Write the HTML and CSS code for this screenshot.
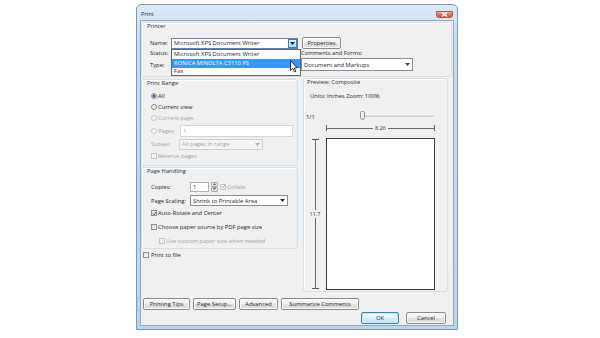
FILE: index.html
```html
<!DOCTYPE html>
<html lang="en">
<head>
    <meta charset="UTF-8">
    <meta name="viewport" content="width=device-width, initial-scale=1.0">
    <title>Print</title>
    <link rel="stylesheet" href="styles.css">
</head>
<body>

<div class="window">
    <div class="titlebar">
        <span class="title">Print</span>
        <span class="close">
            <svg width="7" height="5" viewBox="0 0 7 5"><path d="M1 0.5 L6 4.5 M6 0.5 L1 4.5" stroke="#fff" stroke-width="1.3"/></svg>
        </span>
    </div>

    <div class="client">
        <!-- Printer -->
        <div class="group printer">
            <div class="legend">Printer</div>
            <div class="prow prow-name">
                <div class="pleft">
                    <span class="plabel">Name:</span>
                    <div class="combo combo-name">
                        <span>Microsoft XPS Document Writer</span>
                        <span class="combo-arrow hot"><svg width="5" height="3" viewBox="0 0 5 3"><path d="M0 0 H5 L2.5 3 Z" fill="#111"/></svg></span>
                        <ul class="droplist">
                            <li>Microsoft XPS Document Writer</li>
                            <li class="selected">KONICA MINOLTA C3110 PS</li>
                            <li>Fax</li>
                        </ul>
                    </div>
                </div>
                <button class="btn btn-props">Properties</button>
            </div>
            <div class="prow prow-status">
                <div class="pleft"><span class="plabel">Status:</span></div>
                <span>Comments and Forms:</span>
            </div>
            <div class="prow prow-type">
                <div class="pleft"><span class="plabel">Type:</span></div>
                <div class="combo combo-forms">
                    <span>Document and Markups</span>
                    <span class="combo-arrow"><svg width="5" height="3" viewBox="0 0 5 3"><path d="M0 0 H5 L2.5 3 Z" fill="#444"/></svg></span>
                </div>
            </div>
        </div>

        <div class="middle">
            <div class="leftcol">
                <!-- Print Range -->
                <div class="group range">
                    <div class="legend">Print Range</div>
                    <div class="opt opt-all"><span class="radio checked"></span>All</div>
                    <div class="opt"><span class="radio"></span>Current view</div>
                    <div class="opt disabled"><span class="radio"></span>Current page</div>
                    <div class="opt opt-pages disabled">
                        <span class="pages-label"><span class="radio"></span>Pages</span>
                        <span class="field field-pages">1</span>
                    </div>
                    <div class="opt opt-subset disabled">
                        <span class="subset-label">Subset:</span>
                        <div class="combo combo-subset">
                            <span>All pages in range</span>
                            <span class="combo-arrow"><svg width="5" height="3" viewBox="0 0 5 3"><path d="M0 0 H5 L2.5 3 Z" fill="#b0b0b0"/></svg></span>
                        </div>
                    </div>
                    <div class="opt opt-reverse disabled"><span class="cb"></span>Reverse pages</div>
                </div>

                <!-- Page Handling -->
                <div class="group handling">
                    <div class="legend">Page Handling</div>
                    <div class="hrow hrow-copies">
                        <span class="hlabel">Copies:</span>
                        <span class="field field-copies">1</span>
                        <span class="spin">
                            <span><svg width="3" height="2" viewBox="0 0 3 2"><path d="M0 2 H3 L1.5 0 Z" fill="#555"/></svg></span>
                            <span><svg width="3" height="2" viewBox="0 0 3 2"><path d="M0 0 H3 L1.5 2 Z" fill="#555"/></svg></span>
                        </span>
                        <span class="collate disabled"><span class="cb checked"><svg width="5" height="5" viewBox="0 0 5 5"><path d="M0.8 2.6 L2 3.8 L4.3 0.9" stroke="#a8a8a8" stroke-width="1" fill="none"/></svg></span>Collate</span>
                    </div>
                    <div class="hrow hrow-scaling">
                        <span class="hlabel">Page Scaling:</span>
                        <div class="combo combo-scaling">
                            <span>Shrink to Printable Area</span>
                            <span class="combo-arrow"><svg width="5" height="3" viewBox="0 0 5 3"><path d="M0 0 H5 L2.5 3 Z" fill="#222"/></svg></span>
                        </div>
                    </div>
                    <div class="opt opt-rotate"><span class="cb checked"><svg width="5" height="5" viewBox="0 0 5 5"><path d="M0.8 2.6 L2 3.8 L4.3 0.9" stroke="#2a4a8a" stroke-width="1" fill="none"/></svg></span>Auto-Rotate and Center</div>
                    <div class="opt opt-source"><span class="cb"></span>Choose paper source by PDF page size</div>
                    <div class="opt opt-custom disabled"><span class="cb"></span>Use custom paper size when needed</div>
                </div>

                <div class="opt opt-file"><span class="cb"></span>Print to file</div>
            </div>

            <!-- Preview -->
            <div class="group preview">
                <div class="legend">Preview: Composite</div>
                <div class="units">Units: Inches Zoom: 100%</div>
                <div class="slider-row">
                    <span class="pagenum">1/1</span>
                    <span class="slider"><span class="thumb"></span></span>
                </div>
                <div class="hruler"><span class="rlabel">8.26</span></div>
                <div class="page-row">
                    <div class="vruler"><span class="rlabel">11.7</span></div>
                    <div class="page"></div>
                </div>
            </div>
        </div>

        <div class="toolbar">
            <button class="btn btn-tips">Printing Tips</button>
            <button class="btn btn-setup">Page Setup...</button>
            <button class="btn btn-adv">Advanced</button>
            <button class="btn btn-sum">Summarize Comments</button>
        </div>
        <div class="actions">
            <button class="btn btn-ok">OK</button>
            <button class="btn btn-cancel">Cancel</button>
        </div>
    </div>

    <svg class="cursor" width="8" height="13" viewBox="0 0 8 13">
        <path d="M0.5 0.5 V10.5 L2.8 8.4 L4.4 12 L5.8 11.4 L4.3 7.9 H7.3 Z" fill="#fff" stroke="#000" stroke-width="0.8" stroke-linejoin="round"/>
    </svg>
</div>

</body>
</html>
```

FILE: styles.css
```css
* {
    box-sizing: border-box;
}
body {
    margin: 0;
    width: 600px;
    height: 338px;
    overflow: hidden;
    background-color: #fff;
    font-family: "Open Sans", "Noto Sans", sans-serif;
    font-size: 5.8px;
    color: #1e1e1e;
    position: relative;
}
ul {
    margin: 0;
    padding: 0;
    list-style: none;
}

/* window frame */
.window {
    position: absolute;
    left: 136px;
    top: 4px;
    width: 322px;
    height: 326px;
    border: 1px solid #7a98b8;
    border-radius: 5px 5px 0 0;
    background: linear-gradient(#dce9f6, #c6dbf0 40px, #bcd4ec);
    padding: 0 3px 3px;
    display: flex;
    flex-direction: column;
}
.titlebar {
    height: 15px;
    flex: none;
    padding-left: 1px;
    position: relative;
}
.title {
    display: block;
    margin-top: 6px;
    line-height: 7px;
    color: #1a2a3a;
}
.close {
    position: absolute;
    right: 1px;
    top: 6px;
    width: 17px;
    height: 7px;
    border: 1px solid #a55a4a;
    border-radius: 0 0 3px 3px;
    background: linear-gradient(#ecb6a6, #da7560 50%, #cd5038);
    display: flex;
    align-items: center;
    justify-content: center;
}
.client {
    flex: 1;
    background-color: #f0f0f0;
    border: 1px solid #8fa6c0;
    display: flex;
    flex-direction: column;
}

/* group boxes */
.group {
    border: 1px solid #d5dfe5;
    border-radius: 3px;
    box-shadow: inset 1px 1px 0 #fff;
}
.legend {
    height: 6px;
    line-height: 6px;
    color: #333;
}

/* printer */
.printer {
    margin: 1px 1px 0 0;
    height: 55px;
    flex: none;
    padding-left: 8px;
}
.printer .legend {
    margin-left: -3px;
}
.prow {
    display: flex;
    align-items: flex-start;
}
.pleft {
    width: 151px;
    display: flex;
    align-items: center;
    height: 100%;
}
.plabel {
    width: 21px;
}
.prow-name {
    margin-top: 8px;
    height: 12px;
}
.prow-status {
    height: 8px;
    align-items: center;
}
.prow-type {
    margin-top: 1px;
    height: 13px;
}

/* combos, fields */
.combo {
    position: relative;
    height: 11px;
    background-color: #fff;
    border: 1px solid #8c8c8c;
    display: flex;
    align-items: center;
    padding-left: 2px;
    white-space: nowrap;
}
.combo-arrow {
    position: absolute;
    right: 0;
    top: 0;
    bottom: 0;
    width: 9px;
    display: flex;
    align-items: center;
    justify-content: center;
}
.combo-arrow.hot {
    border: 1px solid #3c7fb1;
    background: linear-gradient(#eaf6fd, #d9f0fc 50%, #bee6fd 50%, #a7d9f5);
}
.combo-name {
    width: 127px;
    border-color: #5d87b0;
}
.combo-forms {
    width: 112px;
    height: 13px;
}
.droplist {
    position: absolute;
    left: -1px;
    top: 10px;
    width: 130px;
    height: 27px;
    background-color: #fff;
    border: 1px solid #646464;
    z-index: 2;
}
.droplist li {
    height: 9px;
    line-height: 9px;
    padding-left: 2px;
}
.droplist li:last-child {
    height: 7px;
    line-height: 7px;
}
.droplist .selected {
    background-color: #3399ff;
    color: #fff;
}
.field {
    height: 12px;
    background-color: #fff;
    border: 1px solid #abadb3;
    padding-left: 2px;
    display: flex;
    align-items: center;
}

/* buttons */
.btn {
    height: 12px;
    padding: 0;
    font: inherit;
    color: #1e1e1e;
    border: 1px solid #8a8a8a;
    border-radius: 2px;
    background: linear-gradient(#f7f7f7, #efefef 50%, #e3e3e3 50%, #d9d9d9);
    box-shadow: inset 0 0 0 1px #fbfbfb;
    display: flex;
    align-items: center;
    justify-content: center;
    white-space: nowrap;
}
.btn-props {
    margin-left: 1px;
    width: 39px;
}

/* radio buttons and check boxes */
.opt {
    display: flex;
    align-items: center;
    height: 10px;
    white-space: nowrap;
}
.disabled {
    color: #a3a3a3;
}
.radio {
    flex: none;
    width: 6px;
    height: 6px;
    margin-right: 1px;
    border: 1px solid #8a8a8a;
    border-radius: 50%;
    background: radial-gradient(#fff, #dcdcdc);
}
.radio.checked {
    background: radial-gradient(circle, #2f6fc0 0, #1c4f96 1.3px, #fff 1.8px, #e4e4e4);
}
.disabled .radio {
    border-color: #c4c4c4;
    background: #f6f6f6;
}
.cb {
    flex: none;
    width: 6px;
    height: 6px;
    margin-right: 1px;
    border: 1px solid #8e8f8f;
    background: linear-gradient(135deg, #dadada, #fff);
    display: flex;
    align-items: center;
    justify-content: center;
}
.cb svg {
    flex: none;
}
.disabled .cb {
    border-color: #c4c4c4;
    background: #f4f4f4;
}

/* print range */
.range {
    margin-top: 1px;
    height: 87px;
    padding-left: 9px;
    display: flex;
    flex-direction: column;
}
.range .legend,
.handling .legend {
    margin-left: -4px;
}
.opt-all {
    margin-top: 5px;
}
.range .opt + .opt {
    margin-top: 1px;
}
.range .opt-pages {
    height: 13px;
}
.pages-label {
    width: 29px;
    display: flex;
    align-items: center;
}
.field-pages {
    width: 113px;
    border-color: #d4d4d4;
}
.range .opt-subset {
    height: 12px;
}
.subset-label {
    width: 28px;
}
.combo-subset {
    width: 84px;
    height: 11px;
    border-color: #cfcfcf;
    background-color: #f4f4f4;
}
.range .opt-reverse {
    margin-top: 2px;
}

/* page handling */
.handling {
    margin-top: 1px;
    height: 82px;
    padding-left: 9px;
    display: flex;
    flex-direction: column;
}
.hrow {
    display: flex;
    align-items: center;
    height: 11px;
    white-space: nowrap;
}
.hlabel {
    width: 39px;
}
.hrow-copies {
    margin-top: 7px;
}
.field-copies {
    width: 19px;
    height: 10px;
}
.spin {
    margin-left: 2px;
    width: 7px;
    height: 10px;
    display: flex;
    flex-direction: column;
}
.spin span {
    flex: 1;
    border: 1px solid #a8a8a8;
    border-radius: 1px;
    background: linear-gradient(#f4f4f4, #e2e2e2);
    display: flex;
    align-items: center;
    justify-content: center;
}
.collate {
    margin-left: 2px;
    display: flex;
    align-items: center;
}
.hrow-scaling {
    margin-top: 3px;
}
.combo-scaling {
    width: 98px;
}
.opt-rotate {
    margin-top: 2px;
}
.opt-source,
.opt-custom {
    margin-top: 4px;
}
.opt-custom {
    padding-left: 8px;
}
.opt-file {
    margin-top: 1px;
    padding-left: 2px;
}
.opt-file .cb {
    margin-right: 2px;
}

/* layout */
.middle {
    margin-top: 1px;
    display: flex;
    align-items: flex-start;
}
.leftcol {
    width: 157px;
    display: flex;
    flex-direction: column;
}

/* preview */
.preview {
    margin-left: 5px;
    width: 145px;
    height: 214px;
    padding-left: 0;
}
.preview .legend {
    padding-left: 3px;
}
.units {
    margin-top: 8px;
    padding-left: 6px;
    height: 6px;
    line-height: 6px;
}
.slider-row {
    margin-top: 13px;
    padding-left: 2px;
    height: 10px;
    display: flex;
    align-items: center;
}
.pagenum {
    width: 54px;
}
.slider {
    position: relative;
    width: 74px;
    height: 2px;
    margin-top: -3px;
    background-color: #e3e3e3;
    border: 1px solid #cdcdcd;
    border-width: 0 0 1px;
}
.thumb {
    position: absolute;
    left: 0;
    top: -4px;
    width: 5px;
    height: 9px;
    border: 1px solid #8e8e8e;
    border-radius: 2px 2px 3px 3px;
    background: linear-gradient(90deg, #fdfdfd, #e6e6e6);
}
.hruler {
    position: relative;
    margin: 3px 0 0 22px;
    width: 109px;
    height: 6px;
    border-left: 1px solid #555;
    border-right: 1px solid #555;
    display: flex;
    align-items: center;
    justify-content: center;
}
.hruler::before {
    content: "";
    position: absolute;
    left: 0;
    right: 0;
    top: 3px;
    border-top: 1px solid #6a6a6a;
}
.rlabel {
    position: relative;
    background-color: #f0f0f0;
    padding: 0 2px;
    line-height: 6px;
    color: #333;
    font-size: 5.5px;
}
.page-row {
    margin-top: 7px;
    display: flex;
    height: 152px;
}
.vruler {
    position: relative;
    width: 22px;
    margin: 1px 0;
    display: flex;
    align-items: center;
    justify-content: center;
}
.vruler::before {
    content: "";
    position: absolute;
    left: 11px;
    top: 0;
    bottom: 0;
    border-left: 1px solid #6a6a6a;
}
.vruler::after {
    content: "";
    position: absolute;
    left: 8px;
    width: 7px;
    top: 0;
    bottom: 0;
    border-top: 1px solid #555;
    border-bottom: 1px solid #555;
}
.vruler .rlabel {
    padding: 1px 0;
    z-index: 1;
}
.page {
    width: 109px;
    height: 152px;
    background-color: #fff;
    border: 1px solid #3a3a3a;
}

/* bottom buttons */
.toolbar {
    margin-top: 6px;
    padding-left: 2px;
    display: flex;
    gap: 3px;
}
.btn-tips {
    width: 47px;
}
.btn-setup {
    width: 43px;
}
.btn-adv {
    width: 39px;
}
.btn-sum {
    width: 78px;
}
.actions {
    margin-top: 2px;
    padding-right: 7px;
    display: flex;
    justify-content: flex-end;
    gap: 7px;
}
.btn-ok {
    width: 38px;
    border-color: #3c7fb1;
    background: linear-gradient(#f2f9fd, #e6f4fc 50%, #d4edfb 50%, #c6e6f8);
    box-shadow: inset 0 0 0 1px #c6ecff;
}
.btn-cancel {
    width: 40px;
}

/* mouse pointer over the list */
.cursor {
    position: absolute;
    left: 153px;
    top: 55px;
    z-index: 5;
}
```
